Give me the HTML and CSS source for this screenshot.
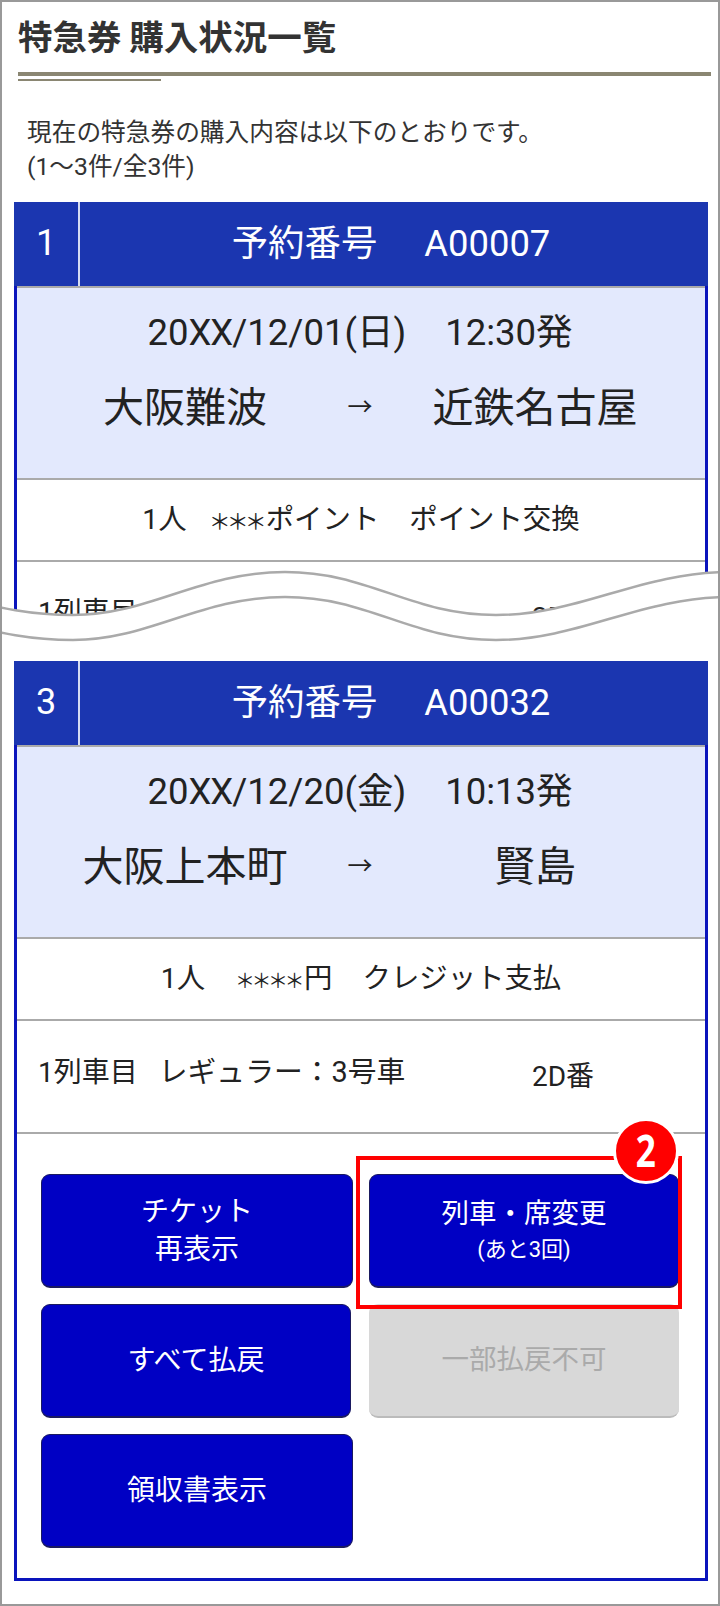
FILE: index.html
```html
<!DOCTYPE html>
<html lang="ja">
<head>
    <meta charset="UTF-8">
    <title>特急券 購入状況一覧</title>
    <link rel="stylesheet" href="styles.css">
</head>
<body>
<div class="frame">
    <h1 class="title">特急券 購入状況一覧</h1>
    <div class="title-sub"></div>
    <p class="desc">現在の特急券の購入内容は以下のとおりです。<br>(1～3件/全3件)</p>

    <div class="cut">
        <div class="card">
            <div class="card-head">
                <div class="num">1</div>
                <div class="no"><span>予約番号</span><span>A00007</span></div>
            </div>
            <div class="trip">
                <div class="date"><span>20<b>XX</b>/12/01(日)</span><span>12:30発</span></div>
                <div class="route"><span>大阪難波</span><i>→</i><span>近鉄名古屋</span></div>
            </div>
            <div class="pay pay-1"><span>1人</span><span><em>＊＊＊</em>ポイント</span><span>ポイント交換</span></div>
            <div class="seat"><span class="seat-name">1列車目</span><span class="seat-no">2D番</span></div>
        </div>
    </div>

    <!-- 省略の波線 -->
    <svg class="wave" viewBox="0 560 720 100" width="720" height="100">
        <path d="M-40 598C0 608 30 615 73 615C150 615 200 572 285 572C370 572 410 615 496 615C580 615 640 572 730 572V660H-40Z" fill="#fff"/>
        <path d="M-40 598C0 608 30 615 73 615C150 615 200 572 285 572C370 572 410 615 496 615C580 615 640 572 730 572" fill="none" stroke="#aaa" stroke-width="2.5"/>
        <path d="M-40 623C0 633 30 640 73 640C150 640 200 597 285 597C370 597 410 640 496 640C580 640 640 597 730 597" fill="none" stroke="#aaa" stroke-width="2.5"/>
    </svg>

    <div class="card card-last">
        <div class="card-head">
            <div class="num">3</div>
            <div class="no"><span>予約番号</span><span>A00032</span></div>
        </div>
        <div class="trip">
            <div class="date"><span>20<b>XX</b>/12/20(金)</span><span>10:13発</span></div>
            <div class="route"><span>大阪上本町</span><i>→</i><span>賢島</span></div>
        </div>
        <div class="pay pay-3"><span>1人</span><span><em>＊＊＊＊</em>円</span><span>クレジット支払</span></div>
        <div class="seat"><span class="seat-name">1列車目<span class="seat-type">レギュラー：3号車</span></span><span class="seat-no">2D番</span></div>
        <div class="btns">
            <a class="btn">チケット<br>再表示</a>
            <a class="btn btn-change">列車・席変更<small>(あと3回)</small>
                <span class="mark"></span>
                <span class="badge"><span>2</span></span>
            </a>
            <a class="btn btn-short">すべて払戻</a>
            <a class="btn btn-off">一部払戻不可</a>
            <a class="btn">領収書表示</a>
        </div>
    </div>
</div>
</body>
</html>
```

FILE: styles.css
```css
*{
    margin: 0;
    padding: 0;
    box-sizing: border-box;
}
body{
    font-family: Roboto, "Noto Sans CJK JP", sans-serif;
    color: #222;
}
.frame{
    position: relative;
    width: 720px;
    height: 1606px;
    border: 2px solid #999;
    background: #fff;
    overflow: hidden;
}
.title{
    height: 74px;
    margin: 0 7px 0 16px;
    border-bottom: 4px solid #8a8672;
    font-family: "Noto Sans CJK JP", sans-serif;
    font-size: 34.5px;
    line-height: 66px;
    font-weight: 700;
    color: #333;
}
.title-sub{
    width: 143px;
    height: 2px;
    margin: 3px 0 0 16px;
    background: #8a8672;
}
.desc{
    margin: 35px 0 18px 25px;
    font-size: 24.7px;
    line-height: 34px;
    color: #333;
}
.cut{
    height: 438px;
    overflow: hidden;
}
.card{
    width: 694px;
    margin-left: 12px;
    border: 3px solid #0a14bc;
    border-top: 0;
}
.card-last{
    margin-top: 21px;
    height: 920px;
}
.card-head{
    display: flex;
    height: 84px;
    margin: 0 -3px;
    background: #1b36b0;
    color: #fff;
}
.num{
    width: 66px;
    border-right: 2px solid #d5dcf2;
    font-size: 36px;
    line-height: 82px;
    text-align: center;
}
.no{
    flex: 1;
    display: flex;
    justify-content: center;
    gap: 47px;
    padding-right: 6px;
    font-size: 36.4px;
    line-height: 84px;
}
.trip{
    height: 194px;
    padding: 20px 15px 0 13px;
    background: #e3e9fd;
    border-top: 2px solid #aaa;
    border-bottom: 2px solid #aaa;
}
.date{
    display: flex;
    justify-content: center;
    gap: 39px;
    font-size: 36.5px;
    line-height: 50px;
}
.date b{
    font-weight: 400;
    letter-spacing: -1px;
}
.route{
    display: grid;
    grid-template-columns: 1fr 40px 1fr;
    margin-top: 21px;
    font-size: 41px;
    line-height: 58px;
    text-align: center;
}
.route i{
    font-style: normal;
    font-size: 25px;
}
.pay{
    display: flex;
    justify-content: center;
    gap: 30px;
    height: 82px;
    border-bottom: 2px solid #aaa;
    font-size: 28.4px;
    line-height: 80px;
}
.pay-1 span:first-child{
    margin-right: -8px;
}
.pay em{
    font-style: normal;
    font-size: 22px;
    letter-spacing: -4px;
    margin-right: 3px;
}
.pay-3 em{
    font-size: 20px;
    letter-spacing: -3.5px;
}
.seat{
    display: flex;
    height: 113px;
    padding: 31px 0 0 21px;
    border-bottom: 2px solid #aaa;
    font-size: 28px;
    line-height: 40px;
}
.seat-name{
    width: 494px;
}
.seat-type{
    margin-left: 21px;
    font-size: 28.8px;
}
.seat-no{
    margin-top: 5px;
}
.btns{
    display: grid;
    grid-template-columns: 312px 310px;
    grid-auto-rows: 114px;
    gap: 16px;
    padding: 40px 0 0 24px;
}
.btn{
    display: flex;
    flex-direction: column;
    justify-content: center;
    align-items: center;
    border-radius: 9px;
    border: 1px solid #1a1a60;
    border-bottom-width: 2px;
    background: #0000c4;
    color: #fff;
    font-size: 28px;
    line-height: 38px;
    text-align: center;
}
.btn small{
    font-size: 22px;
    line-height: 34px;
}
.btn-short{
    width: 310px;
}
.btn-change{
    position: relative;
    font-size: 27.5px;
}
.btn-off{
    background: #d8d8d8;
    border: 0;
    border-bottom: 2px solid #bbb;
    color: #aaa;
    font-size: 27.5px;
}
.mark{
    position: absolute;
    left: -14px;
    top: -19px;
    width: 326px;
    height: 153px;
    border: 4px solid #f00;
}
.badge{
    position: absolute;
    left: 243px;
    top: -57px;
    width: 66px;
    height: 66px;
    border: 3px solid #fff;
    border-radius: 50%;
    background: #f00;
    color: #fff;
    font-family: "Noto Sans", sans-serif;
    font-size: 45px;
    line-height: 58px;
    font-weight: 700;
    text-align: center;
}
.badge span{
    display: inline-block;
    transform: scaleX(.78);
}
.wave{
    position: absolute;
    left: -2px;
    top: 558px;
}
```
